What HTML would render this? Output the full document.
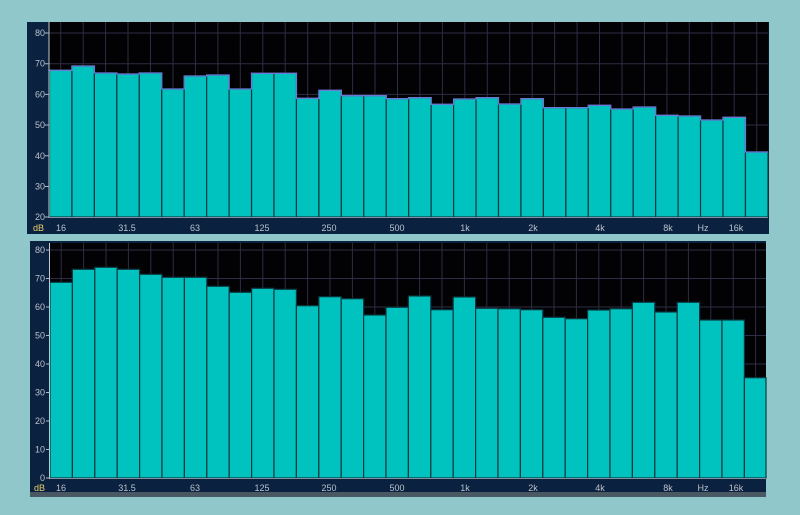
<!DOCTYPE html>
<html><head><meta charset="utf-8"><style>
html,body{margin:0;padding:0;background:#8fc7cb;}
svg{display:block}
text{font-family:"Liberation Sans",sans-serif;font-size:9px;fill:#b9c2cc}
</style></head><body>
<svg width="800" height="515" viewBox="0 0 800 515" xmlns="http://www.w3.org/2000/svg">
<rect width="800" height="515" fill="#8fc7cb"/>
<!-- Panel 1 -->
<rect x="27" y="22" width="742" height="212" fill="#0b2140"/>
<rect x="49.5" y="22" width="719" height="195" fill="#020204"/>
<g stroke="#2e2c44" stroke-width="1">
<path d="M49.5,33H768M49.5,63.7H768M49.5,94.4H768M49.5,125H768M49.5,155.8H768M49.5,186.5H768"/>
<path d="M60.7,22V217M83.2,22V217M105.6,22V217M128,22V217M150.5,22V217M173,22V217M195.4,22V217M217.9,22V217M240.3,22V217M262.8,22V217M285.2,22V217M307.7,22V217M330.1,22V217M352.6,22V217M375,22V217M397.5,22V217M419.9,22V217M442.4,22V217M464.8,22V217M487.3,22V217M509.7,22V217M532.2,22V217M554.6,22V217M577.1,22V217M599.5,22V217M622,22V217M644.4,22V217M666.9,22V217M689.3,22V217M711.8,22V217M734.2,22V217M756.7,22V217"/>
</g>
<g fill="#00c3c0" stroke="#0a3940" stroke-width="1.2">
<rect x="49.5" y="70.3" width="22.45" height="146.7"/>
<rect x="71.95" y="66" width="22.45" height="151"/>
<rect x="94.4" y="73" width="22.45" height="144"/>
<rect x="116.85" y="74" width="22.45" height="143"/>
<rect x="139.3" y="73" width="22.45" height="144"/>
<rect x="161.75" y="89" width="22.45" height="128"/>
<rect x="184.2" y="76" width="22.45" height="141"/>
<rect x="206.65" y="75" width="22.45" height="142"/>
<rect x="229.1" y="89" width="22.45" height="128"/>
<rect x="251.55" y="73.3" width="22.45" height="143.7"/>
<rect x="274" y="73.3" width="22.45" height="143.7"/>
<rect x="296.45" y="98.3" width="22.45" height="118.7"/>
<rect x="318.9" y="90.3" width="22.45" height="126.7"/>
<rect x="341.35" y="95.7" width="22.45" height="121.3"/>
<rect x="363.8" y="95.7" width="22.45" height="121.3"/>
<rect x="386.25" y="98.7" width="22.45" height="118.3"/>
<rect x="408.7" y="97.7" width="22.45" height="119.3"/>
<rect x="431.15" y="104.3" width="22.45" height="112.7"/>
<rect x="453.6" y="99" width="22.45" height="118"/>
<rect x="476.05" y="97.7" width="22.45" height="119.3"/>
<rect x="498.5" y="104" width="22.45" height="113"/>
<rect x="520.95" y="98.7" width="22.45" height="118.3"/>
<rect x="543.4" y="107.7" width="22.45" height="109.3"/>
<rect x="565.85" y="107.7" width="22.45" height="109.3"/>
<rect x="588.3" y="105.3" width="22.45" height="111.7"/>
<rect x="610.75" y="109" width="22.45" height="108"/>
<rect x="633.2" y="107" width="22.45" height="110"/>
<rect x="655.65" y="115.3" width="22.45" height="101.7"/>
<rect x="678.1" y="116" width="22.45" height="101"/>
<rect x="700.55" y="120" width="22.45" height="97"/>
<rect x="723" y="117.3" width="22.45" height="99.7"/>
<rect x="745.45" y="152" width="22.55" height="65"/>
</g>
<path fill="none" stroke="#6c7ad6" stroke-width="1.3" d="M49.5,70.3 H71.95 V66 H94.4 V73 H116.85 V74 H139.3 V73 H161.75 V89 H184.2 V76 H206.65 V75 H229.1 V89 H251.55 V73.3 H274 V73.3 H296.45 V98.3 H318.9 V90.3 H341.35 V95.7 H363.8 V95.7 H386.25 V98.7 H408.7 V97.7 H431.15 V104.3 H453.6 V99 H476.05 V97.7 H498.5 V104 H520.95 V98.7 H543.4 V107.7 H565.85 V107.7 H588.3 V105.3 H610.75 V109 H633.2 V107 H655.65 V115.3 H678.1 V116 H700.55 V120 H723 V117.3 H745.45 V152 H768"/>
<line x1="49" y1="22" x2="49" y2="218" stroke="#c0c8d0" stroke-width="1"/>
<line x1="49" y1="217.5" x2="768" y2="217.5" stroke="#8090a0" stroke-width="1"/>
<g stroke="#b0b8c0" stroke-width="1">
<path d="M45,33H49M45,63.7H49M45,94.4H49M45,125H49M45,155.8H49M45,186.5H49M45,217H49"/>
</g>
<g text-anchor="end">
<text x="45" y="36">80</text><text x="45" y="66.7">70</text><text x="45" y="97.4">60</text><text x="45" y="128">50</text><text x="45" y="158.8">40</text><text x="45" y="189.5">30</text><text x="45" y="220">20</text>
</g>
<text x="33" y="231" style="fill:#e8d06a">dB</text>
<g text-anchor="middle">
<text x="61" y="231">16</text><text x="127" y="231">31.5</text><text x="195" y="231">63</text><text x="262" y="231">125</text><text x="329" y="231">250</text><text x="397" y="231">500</text><text x="465" y="231">1k</text><text x="533" y="231">2k</text><text x="600" y="231">4k</text><text x="668" y="231">8k</text><text x="703" y="231">Hz</text><text x="736" y="231">16k</text>
</g>

<!-- Panel 2 -->
<rect x="30" y="241" width="736" height="252" fill="#0b2140"/>
<rect x="30" y="492" width="736" height="5" fill="#4a5864"/>
<rect x="50" y="243" width="716" height="235" fill="#020204"/>
<g stroke="#2e2c44" stroke-width="1">
<path d="M50,250H766M50,278.5H766M50,307H766M50,335.5H766M50,364H766M50,392.5H766M50,421H766M50,449.5H766"/>
<path d="M61.2,243V478M83.6,243V478M106,243V478M128.4,243V478M150.8,243V478M173.2,243V478M195.6,243V478M218,243V478M240.4,243V478M262.8,243V478M285.2,243V478M307.6,243V478M330,243V478M352.4,243V478M374.8,243V478M397.2,243V478M419.6,243V478M442,243V478M464.4,243V478M486.8,243V478M509.2,243V478M531.6,243V478M554,243V478M576.4,243V478M598.8,243V478M621.2,243V478M643.6,243V478M666,243V478M688.4,243V478M710.8,243V478M733.2,243V478M755.6,243V478"/>
</g>
<g fill="#00c3c0" stroke="#0a3940" stroke-width="1.2">
<rect x="50" y="282.3" width="22.4" height="195.7"/>
<rect x="72.4" y="269.3" width="22.4" height="208.7"/>
<rect x="94.8" y="267.3" width="22.4" height="210.7"/>
<rect x="117.2" y="269.3" width="22.4" height="208.7"/>
<rect x="139.6" y="274.3" width="22.4" height="203.7"/>
<rect x="162" y="277.3" width="22.4" height="200.7"/>
<rect x="184.4" y="277.3" width="22.4" height="200.7"/>
<rect x="206.8" y="286.3" width="22.4" height="191.7"/>
<rect x="229.2" y="292.3" width="22.4" height="185.7"/>
<rect x="251.6" y="288.3" width="22.4" height="189.7"/>
<rect x="274" y="289.3" width="22.4" height="188.7"/>
<rect x="296.4" y="305.7" width="22.4" height="172.3"/>
<rect x="318.8" y="296.7" width="22.4" height="181.3"/>
<rect x="341.2" y="298.7" width="22.4" height="179.3"/>
<rect x="363.6" y="315" width="22.4" height="163"/>
<rect x="386" y="307.3" width="22.4" height="170.7"/>
<rect x="408.4" y="296" width="22.4" height="182"/>
<rect x="430.8" y="309.7" width="22.4" height="168.3"/>
<rect x="453.2" y="297" width="22.4" height="181"/>
<rect x="475.6" y="308.3" width="22.4" height="169.7"/>
<rect x="498" y="308.7" width="22.4" height="169.3"/>
<rect x="520.4" y="309.7" width="22.4" height="168.3"/>
<rect x="542.8" y="317.3" width="22.4" height="160.7"/>
<rect x="565.2" y="318.7" width="22.4" height="159.3"/>
<rect x="587.6" y="310" width="22.4" height="168"/>
<rect x="610" y="308.7" width="22.4" height="169.3"/>
<rect x="632.4" y="302.3" width="22.4" height="175.7"/>
<rect x="654.8" y="312" width="22.4" height="166"/>
<rect x="677.2" y="302.3" width="22.4" height="175.7"/>
<rect x="699.6" y="320" width="22.4" height="158"/>
<rect x="722" y="320" width="22.4" height="158"/>
<rect x="744.4" y="377.7" width="21.6" height="100.3"/>
</g>
<line x1="49.5" y1="243" x2="49.5" y2="479" stroke="#c0c8d0" stroke-width="1"/>
<line x1="50" y1="478.5" x2="766" y2="478.5" stroke="#8090a0" stroke-width="1"/>
<g stroke="#b0b8c0" stroke-width="1">
<path d="M46,250H50M46,278.5H50M46,307H50M46,335.5H50M46,364H50M46,392.5H50M46,421H50M46,449.5H50M46,478H50"/>
</g>
<g text-anchor="end">
<text x="45" y="253">80</text><text x="45" y="281.5">70</text><text x="45" y="310">60</text><text x="45" y="338.5">50</text><text x="45" y="367">40</text><text x="45" y="395.5">30</text><text x="45" y="424">20</text><text x="45" y="452.5">10</text><text x="45" y="481">0</text>
</g>
<text x="34" y="491" style="fill:#e8d06a">dB</text>
<g text-anchor="middle">
<text x="61" y="491">16</text><text x="127" y="491">31.5</text><text x="195" y="491">63</text><text x="262" y="491">125</text><text x="329" y="491">250</text><text x="397" y="491">500</text><text x="465" y="491">1k</text><text x="533" y="491">2k</text><text x="600" y="491">4k</text><text x="668" y="491">8k</text><text x="703" y="491">Hz</text><text x="736" y="491">16k</text>
</g>
</svg>
</body></html>
